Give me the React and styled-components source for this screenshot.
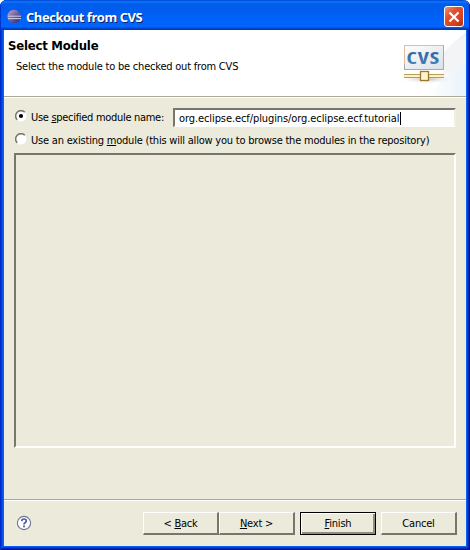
import React from "react";
import styled, { createGlobalStyle, css } from "styled-components";

const Global = createGlobalStyle`
  * { box-sizing: border-box; }
  body { margin: 0; background: #fff; overflow: hidden; }
`;

const Window = styled.div`
  width: 470px;
  height: 550px;
  display: flex;
  flex-direction: column;
  padding: 0 4px 4px;
  border-radius: 7px 7px 0 0;
  overflow: hidden;
  background: #0860f8;
  box-shadow: inset 1px 0 #0028c4, inset -1px -1px #00138c, inset 2px 0 #0040da,
    inset -2px -2px #0026b4, inset 3px 0 #0054ec, inset -3px -3px #0040d8;
  color: #000;
  font: 11px/14px "DejaVu Sans Condensed", "DejaVu Sans", sans-serif;
  font-stretch: condensed;
`;

const TitleBar = styled.header`
  height: 30px;
  flex: none;
  display: flex;
  align-items: center;
  margin: 0 -4px;
  padding: 3px 6px 0 7px;
  gap: 4px;
  background: linear-gradient(#0033c8 0, #0b6bf4 1px, #0874fa 2px, #005ce8 4px, #005cec 8px, #0062f8 18px, #0064ff 27px, #0047d0 28px, #0036b4 30px);
  box-shadow: inset 1px 0 #0034cc, inset -1px 0 #0020a4;
`;

const Title = styled.h1`
  flex: 1;
  margin: 0;
  color: #fff;
  font: bold 13px/16px "Open Sans", sans-serif;
  letter-spacing: ${(p) => p.$spacing};
  text-shadow: 1px 1px 0 #0a246a;
  white-space: nowrap;
`;

const CloseButton = styled.button`
  width: 20px;
  height: 21px;
  padding: 0;
  display: grid;
  place-items: center;
  border: 1px solid #fff;
  border-radius: 3px;
  background: linear-gradient(135deg, #ef9279, #e1512d 35%, #d84120 70%, #b62c0b);
`;

const Frame = styled.div`
  flex: 1;
  display: flex;
  flex-direction: column;
  background: #ebeadb;
`;

const Banner = styled.section`
  height: 67px;
  flex: none;
  display: flex;
  justify-content: space-between;
  background: #fff;
  border-bottom: 1px solid #aca899;
`;

const BannerText = styled.div`
  padding: 8px 0 0 4px;
`;

const Heading = styled.h2`
  margin: 0;
  font: bold 13px/16px "DejaVu Sans Condensed", "DejaVu Sans", sans-serif;
  font-stretch: condensed;
  letter-spacing: ${(p) => p.$spacing};
  white-space: nowrap;
`;

const Label = styled.span`
  letter-spacing: ${(p) => p.$spacing || "-0.21px"};
  padding-top: ${(p) => p.$drop || 0}px;
  white-space: pre;
  u { text-underline-offset: 1px; text-decoration-thickness: 1px; text-decoration-skip-ink: none; }
`;

const Description = styled.p`
  margin: 6px 0 0 8px;
`;

const Body = styled.main`
  flex: 1;
  display: flex;
  flex-direction: column;
  padding: 10px 10px 0;
  border-top: 1px solid #fff;
`;

const Row = styled.label`
  display: flex;
  align-items: center;
  height: ${(p) => p.$height}px;
  padding-left: 1px;
  gap: 4px;
`;

const TextField = styled.div`
  width: 283px;
  height: 19px;
  flex: none;
  margin-left: auto;
  display: flex;
  align-items: center;
  padding: 2px 0 0 4px;
  background: #fff;
  border: solid;
  border-width: 2px 2px 1px 2px;
  border-color: #77756c #f1efe2 #fff #77756c;
`;

const Caret = styled.span`
  width: 1px;
  height: 13px;
  margin: -1px 0 0 1px;
  background: #000;
`;

const ModuleList = styled.div`
  height: 295px;
  margin-top: 2px;
  border: 2px solid;
  border-color: #77756c #fff #fff #77756c;
`;

const Footer = styled.footer`
  height: 47px;
  flex: none;
  display: flex;
  align-items: flex-start;
  padding: 12px 9px 0 12px;
  border-top: 1px solid #aca899;
  box-shadow: inset 0 1px #fff;
`;

const Help = styled.span`
  margin: 3px auto 0 0;
  height: 16px;
`;

const Button = styled.button`
  width: 76px;
  height: 23px;
  padding: 1px 0 0;
  margin-left: ${(p) => p.$gap || 0}px;
  background: #ebeadb;
  color: #000;
  font: inherit;
  border: solid;
  border-width: 1px 2px 2px 1px;
  border-color: #fff #77756c #77756c #fff;
  ${(p) =>
    p.$primary &&
    css`
      border: 1px solid #000;
      box-shadow: inset 1px 1px #fff, inset -2px -2px #8f8d80;
    `}
`;

const RadioSlot = styled.span`
  height: 12px;
  display: flex;
  margin-top: ${(p) => p.$shift}px;
`;

const EclipseIcon = () => (
  <svg width="15" height="15" viewBox="0 0 15 15">
    <defs>
      <linearGradient id="orb" x1="0" y1="0" x2="1" y2="1">
        <stop offset="0" stopColor="#d0a6c0" />
        <stop offset=".5" stopColor="#6b61a4" />
        <stop offset="1" stopColor="#28246f" />
      </linearGradient>
    </defs>
    <circle cx="7" cy="7.5" r="6.7" fill="url(#orb)" />
    <path d="M1 7.2h13M1 9.6h13" stroke="#d5cee8" strokeWidth="1" />
  </svg>
);

const CvsIcon = () => (
  <svg width="75" height="66" viewBox="0 0 75 66">
    <defs>
      <linearGradient id="ray" x1="0" x2="1">
        <stop offset="0" stopColor="#fff" />
        <stop offset="1" stopColor="#e9f3fa" />
      </linearGradient>
      <linearGradient id="plate" x1="0" y1="0" x2="1" y2="1">
        <stop offset="0" stopColor="#fff" />
        <stop offset="1" stopColor="#d9e0e7" />
      </linearGradient>
      <linearGradient id="word" x1="0" y1="0" x2="0" y2="1">
        <stop offset="0" stopColor="#285b9c" />
        <stop offset="1" stopColor="#4b89bc" />
      </linearGradient>
      <radialGradient id="shade">
        <stop offset="0" stopColor="#bbb" />
        <stop offset="1" stopColor="#fff" stopOpacity="0" />
      </radialGradient>
    </defs>
    <path d="M75 2Q62 12 52 22V50L35 66H75Z" fill="url(#ray)" />
    <path d="M75 6L53 22v22l22-10Z" fill="#f3f4f5" />
    <ellipse cx="36" cy="49" rx="29" ry="5" fill="url(#shade)" />
    <rect x="13.5" y="15.5" width="39" height="24" fill="url(#plate)" stroke="#a7aaa9" />
    <path d="M13 15.5h39M13.5 15v19" stroke="#e5b99b" />
    <text x="15.5" y="34" textLength="33.5" lengthAdjust="spacingAndGlyphs" fill="url(#word)" fontFamily="Open Sans, sans-serif" fontWeight="700" fontSize="16.5" letterSpacing="0.6">CVS</text>
    <path d="M13 44.5h40M13 47.5h40" stroke="#b99c56" />
    <path d="M13 46h40" stroke="#fff1bd" strokeWidth="2" />
    <rect x="29.5" y="41.5" width="8" height="9" fill="#fff4cb" stroke="#9b782d" strokeWidth="1.3" />
  </svg>
);

const RadioIcon = ({ checked }) => (
  <svg width="12" height="12" viewBox="0 0 12 12">
    <circle cx="6" cy="6" r="5.5" fill="#fff" />
    <path d="M2.2 9.8A5.3 5.3 0 0 1 9.8 2.2" fill="none" stroke="#77756c" strokeWidth="1.5" />
    {checked && <circle cx="6" cy="6" r="2.1" fill="#000" />}
  </svg>
);

const HelpIcon = () => (
  <svg width="16" height="16" viewBox="0 0 16 16">
    <circle cx="8" cy="8" r="6.6" fill="#fff" stroke="#6c7494" strokeWidth="1.1" />
    <path d="M5.7 6.1Q5.8 4 8 4t2.3 2Q10.3 7.2 9 7.8 8 8.3 8 9.5" fill="none" stroke="#54549a" strokeWidth="1.7" />
    <rect x="7.1" y="10.5" width="1.8" height="1.8" fill="#54549a" />
  </svg>
);

export default function App() {
  return (
    <>
      <Global />
      <Window>
        <TitleBar>
          <EclipseIcon />
          <Title $spacing="-0.45px">Checkout from CVS</Title>
          <CloseButton aria-label="Close">
            <svg width="14" height="14" viewBox="0 0 14 14">
              <path d="M2.5 2.5l9 9M11.5 2.5l-9 9" stroke="#fff" strokeWidth="2.2" />
            </svg>
          </CloseButton>
        </TitleBar>
        <Frame>
          <Banner>
            <BannerText>
              <Heading $spacing="-0.22px">Select Module</Heading>
              <Description>
                <Label>Select the module to be checked out from CVS</Label>
              </Description>
            </BannerText>
            <CvsIcon />
          </Banner>
          <Body>
            <Row $height={19}>
              <RadioSlot $shift={-3}><RadioIcon checked /></RadioSlot>
              <Label $spacing="-0.3px">Use <u>s</u>pecified module name:</Label>
              <TextField>
                <Label $spacing="-0.09px">org.eclipse.ecf/plugins/org.eclipse.ecf.tutorial</Label>
                <Caret />
              </TextField>
            </Row>
            <Row $height={24}>
              <RadioSlot $shift={0}><RadioIcon /></RadioSlot>
              <Label $drop={3}>Use an existing <u>m</u>odule (this will allow you to browse the modules in the repository)</Label>
            </Row>
            <ModuleList />
          </Body>
          <Footer>
            <Help><HelpIcon /></Help>
            <Button><Label>{"< "}<u>B</u>ack</Label></Button>
            <Button><Label><u>N</u>{"ext >"}</Label></Button>
            <Button $primary $gap={5}><Label><u>F</u>inish</Label></Button>
            <Button $gap={5}><Label>Cancel</Label></Button>
          </Footer>
        </Frame>
      </Window>
    </>
  );
}
